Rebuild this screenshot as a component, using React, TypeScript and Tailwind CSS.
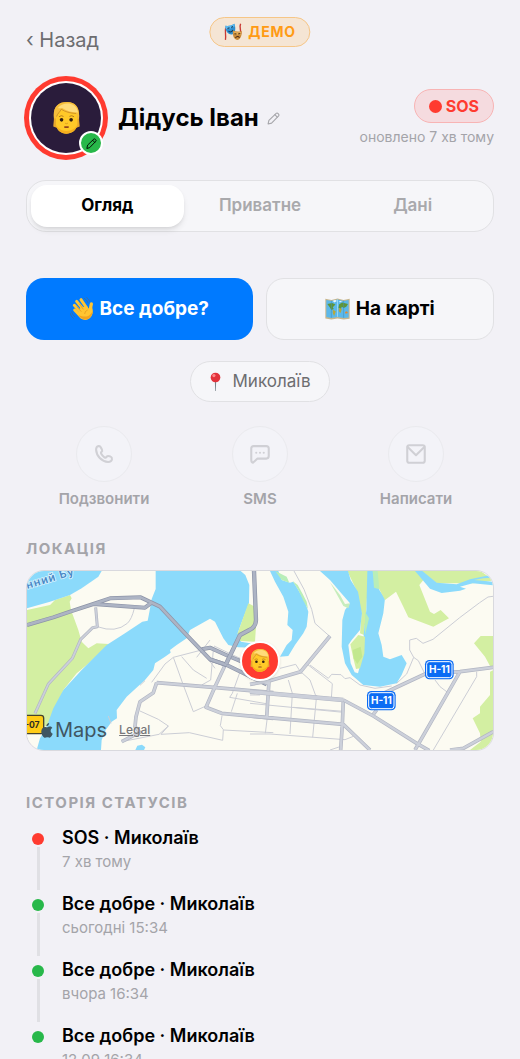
import { useState } from "react";
import type { ReactNode } from "react";

interface StatusEntry {
  id: number;
  title: string;
  time: string;
  dot: string;
}

const TABS = ["Огляд", "Приватне", "Дані"];

const HISTORY: StatusEntry[] = [
  { id: 1, title: "SOS · Миколаїв", time: "7 хв тому", dot: "bg-[#ff3b30]" },
  { id: 2, title: "Все добре · Миколаїв", time: "сьогодні 15:34", dot: "bg-[#28b84a]" },
  { id: 3, title: "Все добре · Миколаїв", time: "вчора 16:34", dot: "bg-[#28b84a]" },
  { id: 4, title: "Все добре · Миколаїв", time: "12.09 16:34", dot: "bg-[#28b84a]" },
];

function FaceIcon({ className }: { className: string }) {
  return (
    <svg viewBox="0 0 80 97" className={className} aria-hidden="true">
      <path d="M2 46C-1 16 14 0 42 0c26 0 38 18 36 48 0 12 2 20 2 26l-10 4H10L0 74c0-6 2-16 2-28z" fill="#e8a92c" />
      <path d="M8 48C8 26 20 18 40 18s33 8 33 28v18c0 20-15 32-33 32S8 84 8 66z" fill="#ffc928" />
      <path d="M9 70c3 17 16 26 31 26s29-9 32-26c-5 11-17 18-32 18S14 81 9 70z" fill="#f5ae1e" />
      <path d="M2 50C-2 18 12 0 42 0c26 0 39 18 36 50l-5 2c1-8-1-14-5-17-16-1-32-5-44-13-4 9-12 14-15 28z" fill="#f6bf3c" />
      <path d="M14 18C24 4 48 0 62 10c8 6 12 13 13 22C58 32 40 27 27 18c-4 0-9 2-13 0z" fill="#ffdc7a" />
      <path d="M24 22c12 8 28 12 45 13M24 22c-4 9-11 12-14 22" fill="none" stroke="#c98a22" strokeWidth="2.500" />
      <path d="M18 44q6-5 12-1M50 43q6-4 12 1" fill="none" stroke="#b57a1d" strokeWidth="3" strokeLinecap="round" />
      <circle cx="25" cy="54" r="5.500" fill="#2f1d12" />
      <circle cx="54" cy="54" r="5.500" fill="#2f1d12" />
      <path d="M37 65q3 2 6 0" fill="none" stroke="#d99a1c" strokeWidth="3" strokeLinecap="round" />
      <path d="M35 76h10" fill="none" stroke="#93451a" strokeWidth="5" strokeLinecap="round" />
    </svg>
  );
}

function PencilIcon({ className }: { className: string }) {
  return (
    <svg viewBox="0 0 24 24" className={className} fill="none" stroke="currentColor" strokeWidth="2" strokeLinejoin="round" strokeLinecap="round" aria-hidden="true">
      <path d="M2 22l1.500-6.500L17 2.500q1.500-1.500 3.500.5l.5.500q2 2 .5 3.500L8.500 20.500z" />
      <path d="M14.500 5l4.500 4.500" />
    </svg>
  );
}

function MasksIcon() {
  return (
    <svg viewBox="0 0 52 52" className="size-[18px]" aria-hidden="true">
      <path d="M4 14C0 25 6 34 3 49M47 2c-5 10 2 17 0 30" fill="none" stroke="#c93a34" strokeWidth="4" />
      <path d="M3 8q15 2 26-6c5 14 3 28-7 31C10 34 3 23 3 8z" fill="#2f8fd0" />
      <path d="M3 8q15 2 26-6l1 8Q18 17 4 18z" fill="#5bb9ee" />
      <path d="M9 16l6-2M20 13l5-3M12 24q8 5 13-4" fill="none" stroke="#173c59" strokeWidth="3" />
      <path d="M25 22q12 5 25 1c1 14-4 25-13 26-10-1-14-14-12-27z" fill="#c98a3a" />
      <path d="M26 24q12 5 23 1l-1 8q-11 3-21-1z" fill="#e5ad55" />
      <path d="M29 31l6 1M40 32l6-2M32 43q6-7 12-1" fill="none" stroke="#4a2b18" strokeWidth="3" />
    </svg>
  );
}

function WaveIcon() {
  return (
    <svg viewBox="0 0 72 72" className="size-6" aria-hidden="true">
      <g fill="none" stroke="#ffc532" strokeWidth="9" strokeLinecap="round">
        <path d="M33 8l17 25M20 13l23 28M13 25l25 26M14 39l20 21" />
        <path d="M55 45q8-9 9-24" strokeWidth="10" />
      </g>
      <path d="M31 33l19-7 9 13 7-9c6 15 1 31-12 37-14 6-25-5-31-14z" fill="#ffc532" />
      <path d="M25 54c8 11 19 17 29 12 9-5 14-14 14-25-6 14-18 24-43 13z" fill="#f2a41f" />
      <path d="M28 20l12 17M20 29l14 15M44 51q0-9 9-12" fill="none" stroke="#df9118" strokeWidth="2" />
      <path d="M43 4q8 5 11 13M50 1q7 5 9 12M5 44q1 9 9 15M1 50q1 9 9 14" fill="none" stroke="#426c91" strokeWidth="2.500" strokeLinecap="round" />
    </svg>
  );
}

function WorldMapIcon() {
  return (
    <svg viewBox="0 0 74 64" className="h-[22px] w-[25px]" aria-hidden="true">
      <path d="M1 2l18 3 18-4 18 4 18-3v59l-18 2-18-3-18 3-18-3z" fill="#c7b68c" />
      <path d="M4 5l15 3 18-4 18 4 15-3v52l-15 2-18-3-18 3-15-3z" fill="#5cb8ea" />
      <path d="M7 17l14-3 10 5-8 8 3 5-7 3-5-8zM42 18l9-5 17 4-5 8-8 4-5-4-4 8-6-5z" fill="#5f9638" />
      <path d="M23 34l9 5-5 14-4-9zM41 29l9 2-4 13-5-5z" fill="#b8a83a" />
      <path d="M59 41l6-2 3 5-7 2z" fill="#e5892d" />
      <path d="M19 7v51M55 7v51" stroke="#3d8fbd" strokeWidth="1.500" />
      <path d="M37 4v51" stroke="#b5e4f8" strokeWidth="2" />
      <path d="M23 8q8-5 12 0l-7 5zM42 8l9 1-7 4z" fill="#e9f6fa" />
    </svg>
  );
}

function PinIcon() {
  return (
    <svg viewBox="0 0 40 62" className="h-5 w-[13px]" aria-hidden="true">
      <path d="M18 28h4l-1 31h-2z" fill="#77838a" />
      <circle cx="20" cy="17" r="15" fill="#e2323b" />
      <circle cx="15" cy="11" r="5" fill="#ff8688" />
    </svg>
  );
}

// Casing is drawn first, then the lighter road surface over it
function Road({ d, width, dark }: { d: string; width: number; dark?: boolean }) {
  return (
    <g fill="none" strokeLinejoin="round">
      <path d={d} stroke={dark ? "#8d94a8" : "#b2b6c3"} strokeWidth={width} />
      <path d={d} stroke={dark ? "#adb4c4" : "#ccd0da"} strokeWidth={width - 4} />
    </g>
  );
}

function RoadSign({ x, y }: { x: number; y: number }) {
  return (
    <g transform={`translate(${x} ${y})`}>
      <rect width="86" height="58" rx="13" fill="#0b6cf4" />
      <rect x="5" y="5" width="76" height="48" rx="8" fill="#0b6cf4" stroke="#fff" strokeWidth="3" />
      <text x="43" y="40" textAnchor="middle" fontSize="30" fontWeight="700" fill="#fff">
        Н-11
      </text>
    </g>
  );
}

function MapCanvas() {
  return (
    <svg viewBox="51 123 1398 537" preserveAspectRatio="xMidYMid slice" className="block h-[179px] w-full" aria-hidden="true">
      <rect x="51" y="123" width="1398" height="537" fill="#fcfbf2" />

      <path d="M51 240l69-15 15-15 45-15 5 10-6 10 4 25 22 60 10 35 20 20 25-15 35 2-20 23-45 40-30 25-40 50-20 60-20 40-30 20-49 5z" fill="#d3efa2" />
      <path d="M51 123h224l-10 17-50 35-35 20-60 20-69 20z" fill="#8bdafb" />
      <path d="M437 123h255l14 12 12 30-1 55-27 70-7 20 10 25 37 6v12l-45-1-30-7-15-20-25-50-15-9-60 34-10 25-30 20-20 15 2 8-17 12-30 20-5 20-25 30-55 50-30 40 1 25-16 10-18 25-12 30-2 30H80l10-35 20-35 20-55 30-55 55-60 75-75 55-35 52-35 16-3 5-25 7-40 12-30z" fill="#8bdafb" />
      <path d="M715 220l20 10 3 60-3 45-45-2-7-23z" fill="#d3efa2" />
      <path d="M376 660l6-13 14-3 10 8-4 8z" fill="#8bdafb" />

      <g transform="translate(720 0)">
        <path d="M60 123h25l10 27 25 8 10-3 15 25 20 35 10 30-5 45-10 20-25 35-20 33-25 2 20-35 15-15 3-30-16-15 3-40-15-45-25-45z" fill="#8bdafb" />
        <path d="M76 123l34 17 8 18-23-8zM128 153l15 12 15 27 12 23 4 22-14-25-15-32z" fill="#b9eeb8" />
        <path d="M292 123h64l-8 127-6 65-12-5 5-60-16-70z" fill="#d3efa2" />
        <path d="M210 123h84l8 27 22 35 12 65-6 50-25 30-10 15 7 55 12 27 10 3 18-70-1-45 8-75 3-117h18l5 27 13 30 17 25-5 45-15 60 10 35 5 35 20 8 35-13 15 25-15 35-15 25-50 10-50-5-35-30-20-35-10-50 2-80 8-30 15-20-30-35-30-35z" fill="#8bdafb" />
        <path d="M240 157l30 38 15 27 15-2-5 15-15-7z" fill="#c7edbd" />
        <path d="M301 343l24-28 20 5-2 50-13 45-12 2-8-32z" fill="#d3efa2" />
        <path d="M308 360l24-10 5 30-15 22-11-17z" fill="#c3e88e" />
        <path d="M368 123h137l15 27-12 15 32 80 12 7 20-12 25 25-47 25-75-28-15-32-22-45-33 25-17-32z" fill="#d3efa2" />
        <path d="M368 123h15l5 55-16-5zM345 245l12 20-12 50z" fill="#b9eeb8" />
        <path d="M512 123h180l38 28-60 9-110 0z" fill="#d3efa2" />
        <path d="M495 123h22l43 35 60 5 40-15 70-15v10l-30 2-28 5 58 5v11l-62-6-38 10 18 6-18 6-55 7-35-13z" fill="#8bdafb" />
        <path d="M672 340l20-22h38v90h-10l-15-28zM730 420l-10 5v70l-30 35v20l-22 15 22 45 2 25-32 25h70z" fill="#d3efa2" />
      </g>

      <g fill="none" stroke="#cbcdd5" strokeWidth="3">
        <path d="M262 290q55 20 90-10 13-12 21-45M425 457l40-55 25-20 85-22 40 55M490 382l28 78 32 85 38-17M515 380l35 40 40 25M612 348l80 38M610 360l-8 90-27 15M692 420l-25 70-8 12 115 20M682 490l-18 55M390 543l55 25 30 20-28 25-112 22M475 588l-22 25 85-5 100 23 2-32-9-12 5-30M640 600l150 8M295 558l8 22M405 452l-15 14M600 330l-40 52" />
        <g transform="translate(720 0)">
          <path d="M132 123l30 55 23 60 10 42 43 38M90 415l47-12 18 28M152 425l28 25 20 55M152 425l20-22 75 58-3 45M115 450l12 40-7 122M200 495l-12 127M52 562l-6 48M0 520l280 27M130 532l150 12M0 612h60l225 17 25-10M0 495h30M240 660l30-10M180 405l55 40 10-12 28 1 12 12 15-3 30 22 45 10 50-7M525 432l-20-40-14-10-12-22v-30l20-5 20 15 30-12 80-65 60-45 25-17 22-3M491 382l-21 50-30 28M555 450l15 20 24 18M680 425v15L550 660" />
        </g>
      </g>

      <Road d="M257 232l5 58-14 3-36 35-25 57-72 77-40 88" width={9} />
      <Road d="M440 458l170 14 180 16M440 458l-10 30-40 27-12 45-3 30 14 17-54 28M648 400l-33 70-27 62 47 18 155 15" width={11} />
      <Road d="M600 388l50 17 120 58M575 358l25-5 55 25 60 25" width={12} dark />
      <g transform="translate(720 0)">
        <Road d="M0 463l57-10 95-28 88-107M57 453l-7 110M0 558l280 25 80 77M280 510l-3 73-5 77M0 440l57 22" width={11} />
        <Road d="M280 510l90 48 130 82 38 22M370 553l10-13M390 495l135-63 105-7 100-13M630 425L495 660M600 660l40-5 90-50" width={11} />
        <Road d="M0 485l280 25" width={14} />
      </g>
      <Road d="M51 285l79-23 50-17 70-23 50-17 92-3 58 28 70 75 80 83 50 17M250 222l155 11 20-15" width={12} dark />
      <Road d="M732 123l6 147q-1 22-20 30l-28 15-42 87" width={13} dark />

      <g fontFamily="Inter, sans-serif">
        <text transform="translate(52 177) rotate(-17)" fontSize="33" fontWeight="600" letterSpacing="3" fill="#4989c7" stroke="#d9f2fd" strokeWidth="5" paintOrder="stroke">
          нний Бу
        </text>
        <RoadSign x={1245} y={390} />
        <RoadSign x={1071} y={483} />
        <rect x="20" y="556" width="81" height="55" rx="8" fill="#ffcc16" stroke="#45442e" strokeWidth="4" />
        <text x="89" y="594" textAnchor="end" fontSize="26" fontWeight="700" fill="#2c2b24">
          -07
        </text>
      </g>
    </svg>
  );
}

function AppleIcon() {
  return (
    <svg viewBox="0 0 32 42" className="h-[15px] w-3" fill="currentColor" aria-hidden="true">
      <path d="M22 0c0 5-3 9-8 9 0-5 4-9 8-9zM16 12c2 0 5-3 9-2 3 0 5 2 6 4-7 4-6 13 1 16-2 6-6 11-9 11s-4-1-7-1-4 2-7 1C4 40 0 30 0 24c0-8 5-13 10-13 3 0 4 1 6 1z" />
    </svg>
  );
}

function PhoneIcon() {
  return (
    <path d="M7.500 3.200Q7 2.500 5.500 2.500 2.500 3 2.500 7C3 14 9 21 17 21.500q4 0 4.500-3 .3-2.500-1.500-3.300-3.500-1.700-5 .3-1 1.500-2.500.5-2.500-1.700-4-4.500-.5-1.500.7-2.200Q11 8 7.500 3.200z" />
  );
}

function SmsIcon() {
  return (
    <>
      <path d="M4.500 2.500h15q3 0 3 3v9q0 3-3 3H9L3.500 22.500Q1.500 22 1.500 19V5.500q0-3 3-3z" />
      <path d="M7.500 10.500h.01M12 10.500h.01M16.500 10.500h.01" />
    </>
  );
}

function MailIcon() {
  return (
    <>
      <rect x="1.500" y="1.500" width="21" height="21" rx="2.500" />
      <path d="M2 3.500l10 10 10-10" />
    </>
  );
}

function ContactAction({ label, children }: { label: string; children: ReactNode }) {
  return (
    <button type="button" className="flex flex-1 flex-col items-center gap-1.5 text-[15px] leading-[22px] font-semibold text-[#a4a4a9]">
      <span className="flex size-14 items-center justify-center rounded-full border border-[#eaeaee] bg-[#f3f3f8] text-[#d0d0d5]">
        <svg viewBox="0 0 24 24" className="size-5" fill="none" stroke="currentColor" strokeWidth="2.500" strokeLinecap="round" strokeLinejoin="round" aria-hidden="true">
          {children}
        </svg>
      </span>
      {label}
    </button>
  );
}

export default function App() {
  const [tab, setTab] = useState("Огляд");

  return (
    <div className="relative min-h-screen bg-[#f2f1f6] px-[26px] pt-6 font-[Inter,sans-serif] text-black">

      <div className="absolute top-[17px] left-1/2 flex h-[30px] -translate-x-1/2 items-center gap-1.5 rounded-full border border-[#f6c687] bg-[#f5e5d4] px-3.5 text-sm font-bold tracking-wider text-[#ff9b15]">
        <MasksIcon />
        ДЕМО
      </div>

      <button type="button" className="block text-xl leading-8 text-[#6d6d70]">‹ Назад</button>

      <header className="mt-[22px] flex items-center gap-3">
        <div className="relative size-20 rounded-full border-[3px] border-[#ff3b30] bg-white p-0.5 ring-2 ring-[#ff3b30]">
          <div className="flex size-full items-center justify-center rounded-full bg-[#2a1c3b]">
            <FaceIcon className="h-8 w-[27px]" />
          </div>
          <button type="button" aria-label="Змінити аватар" className="absolute right-0 bottom-0 flex size-6 items-center justify-center rounded-full border-2 border-white bg-[#28b84a]">
            <PencilIcon className="size-[11px]" />
          </button>
        </div>

        <div className="flex flex-1 items-center gap-2">
          <h1 className="text-2xl font-bold whitespace-nowrap">Дідусь Іван</h1>
          <button type="button" aria-label="Змінити ім'я" className="text-[#a6a6aa]">
            <PencilIcon className="size-[13px]" />
          </button>
        </div>

        <div className="flex flex-col items-end gap-1">
          <span className="flex h-[34px] items-center gap-1 rounded-full border border-[#f8b4b4] bg-[#f5dbdf] px-3.5 text-base font-bold text-[#ff3b30]">
            <span className="size-[13px] rounded-full bg-[#ff3b30]" />
            SOS
          </span>
          <span className="text-sm whitespace-nowrap text-[#a4a4a9]">оновлено 7 хв тому</span>
        </div>
      </header>

      <div role="tablist" className="mt-[22px] flex rounded-[20px] border border-[#e1e1e4] bg-[#f6f6f9] p-1">
        {TABS.map((name) => (
          <button
            key={name}
            type="button"
            role="tab"
            aria-selected={tab === name}
            onClick={() => setTab(name)}
            className={
              tab === name
                ? "h-[42px] flex-1 rounded-2xl bg-white text-[17px] font-bold text-black shadow-md shadow-black/10"
                : "h-[42px] flex-1 rounded-2xl text-[17px] font-semibold text-[#a9a9ac]"
            }
          >
            {name}
          </button>
        ))}
      </div>

      <div className="mt-[46px] flex gap-[13px]">
        <button type="button" className="flex h-[62px] flex-1 items-center justify-center gap-1.5 rounded-[18px] bg-[#007aff] text-[19px] font-bold text-white">
          <WaveIcon />
          Все добре?
        </button>
        <button type="button" className="flex h-[62px] flex-1 items-center justify-center gap-1.5 rounded-[18px] border border-[#e1e1e4] bg-[#f6f6f9] text-[19px] font-bold">
          <WorldMapIcon />
          На карті
        </button>
      </div>

      <div className="mt-[21px] flex justify-center">
        <span className="flex h-[41px] items-center gap-2.5 rounded-full border border-[#e1e1e4] bg-[#f6f6f9] px-[18px] text-[17px] text-[#6d6d70]">
          <PinIcon />
          Миколаїв
        </span>
      </div>

      <div className="mt-6 flex">
        <ContactAction label="Подзвонити">
          <PhoneIcon />
        </ContactAction>
        <ContactAction label="SMS">
          <SmsIcon />
        </ContactAction>
        <ContactAction label="Написати">
          <MailIcon />
        </ContactAction>
      </div>

      <section className="mt-7">
        <h2 className="text-[15px] leading-[22px] font-bold tracking-widest text-[#a4a4a9]">ЛОКАЦІЯ</h2>

        <div className="relative mt-2.5 overflow-hidden rounded-[18px] border border-[#d9d9de]">
          <MapCanvas />

          <div className="absolute top-1/2 left-1/2 flex size-10 -translate-1/2 items-center justify-center rounded-full border-2 border-white bg-[#ff3b30] shadow-sm">
            <FaceIcon className="h-[23px] w-5" />
          </div>

          <div className="absolute bottom-2 left-3.5 flex items-center gap-3">
            <span className="flex items-center gap-0.5 text-xl leading-6 text-[#3f5662]">
              <AppleIcon />
              Maps
            </span>
            <a href="#legal" className="text-xs font-medium text-[#77777a] underline">Legal</a>
          </div>
        </div>
      </section>

      <section className="mt-[41px]">
        <h2 className="text-[15px] leading-[22px] font-bold tracking-widest text-[#a4a4a9]">ІСТОРІЯ СТАТУСІВ</h2>

        <ol className="mt-2.5">
          {HISTORY.map((item, i) => (
            <li key={item.id} className="flex gap-[18px] pl-1.5">
              <div className="flex flex-col items-center pt-[9px]">
                <span className={`size-3 rounded-full ${item.dot}`} />
                {i < HISTORY.length - 1 && (
                  <span className="mt-0.5 w-[3px] flex-1 bg-[#e0e0e4]" />
                )}
              </div>

              <div className="pt-px pb-[17px]">
                <p className="text-lg leading-[26px] font-semibold">{item.title}</p>
                <p className="text-[15px] leading-[22px] text-[#a4a4a9]">{item.time}</p>
              </div>
            </li>
          ))}
        </ol>
      </section>

    </div>
  );
}
